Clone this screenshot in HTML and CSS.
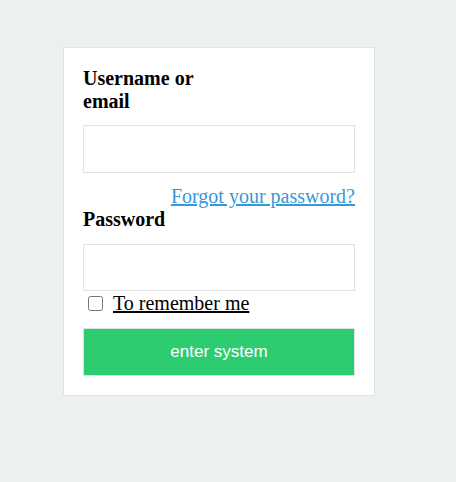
FILE: index.html
```html
<!DOCTYPE html>
<html>
<head>
<meta charset="utf-8">
<link rel="stylesheet" href="styles.css">
</head>
<body>
<form class="card">
  <label class="label label-user" for="user">Username or email</label>
  <input class="field field-user" id="user" type="text">
  <div class="forgot-row"><a class="forgot" href="#">Forgot your password?</a></div>
  <label class="label" for="pass">Password</label>
  <input class="field field-pass" id="pass" type="password">
  <div class="remember-row">
    <input class="check" id="rem" type="checkbox">
    <label class="remember" for="rem">To remember me</label>
  </div>
  <button class="submit" type="button">enter system</button>
</form>
</body>
</html>
```
FILE: styles.css
```css
html, body {
  margin: 0;
  padding: 0;
}
body {
  background: #ecf0f1;
  padding: 47px 0 0 63px;
  font-family: "Liberation Serif", "Times New Roman", serif;
}
.card {
  box-sizing: border-box;
  width: 312px;
  background: #fff;
  border: 1px solid #e1e4e5;
  padding: 19px;
  display: flex;
  flex-direction: column;
}
.label {
  display: block;
  font-size: 20px;
  font-weight: bold;
  line-height: 23px;
  color: #000;
}
.label-user {
  width: 136px;
}
.field {
  box-sizing: border-box;
  width: 100%;
  height: 48px;
  margin: 12px 0 0;
  border: 1px solid #dfe1e2;
  background: #fff;
  outline: none;
  padding: 0 10px;
}
.field-pass {
  margin-top: 13px;
  height: 47px;
}
.forgot-row {
  margin-top: 12px;
  text-align: right;
  font-size: 20px;
  line-height: 23px;
}
.forgot {
  color: #3498db;
  text-decoration: underline;
}
.remember-row {
  display: flex;
  align-items: center;
  height: 23px;
  margin-top: 1px;
  font-size: 20px;
  line-height: 23px;
}
.check {
  width: 15px;
  height: 15px;
  margin: 0 10px 0 5px;
}
.remember {
  color: #000;
  text-decoration: underline;
}
.submit {
  box-sizing: border-box;
  width: 100%;
  height: 48px;
  margin-top: 13px;
  background: #2ecc71;
  border: 1px solid #dfe1e2;
  color: #fff;
  font-family: "Liberation Sans", Arial, sans-serif;
  font-size: 17px;
  cursor: pointer;
}
```
